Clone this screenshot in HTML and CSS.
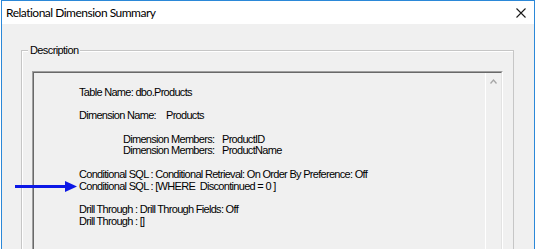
FILE: index.html
```html
<!DOCTYPE html>
<html lang="en">
<head>
  <meta charset="UTF-8">
  <title>Relational Dimension Summary</title>
  <link rel="stylesheet" href="styles.css">
</head>
<body>

  <div class="window">
    <div class="titlebar">
      <span class="title">Relational Dimension Summary</span>
      <svg class="close" width="10" height="10" viewBox="0 0 10 10">
        <path d="M0.5 0.5 L9.5 9.5 M9.5 0.5 L0.5 9.5" stroke="#1a1a1a" stroke-width="1.1" fill="none"/>
      </svg>
    </div>

    <div class="client">
      <div class="group">
        <span class="group-label">Description</span>

        <div class="textbox">
          <div class="textbox-inner">
            <div class="text">
              <div class="para">
                <div>Table Name: dbo.Products</div>
              </div>
              <div class="para">
                <div><span class="key">Dimension Name:</span>Products</div>
              </div>
              <div class="para members">
                <div><span class="key">Dimension Members:</span>ProductID</div>
                <div><span class="key">Dimension Members:</span>ProductName</div>
              </div>
              <div class="para">
                <div>Conditional SQL : Conditional Retrieval: On Order By Preference: Off</div>
                <div>Conditional SQL : [WHERE &nbsp;Discontinued = 0 ]</div>
              </div>
              <div class="para">
                <div>Drill Through : Drill Through Fields: Off</div>
                <div>Drill Through : []</div>
              </div>
            </div>

            <div class="scrollbar">
              <svg class="arrow-up" width="7" height="5" viewBox="0 0 7 5">
                <path d="M0.5 4.5 L3.5 1 L6.5 4.5" stroke="#a6a6a6" stroke-width="1.3" fill="none"/>
              </svg>
            </div>
          </div>
        </div>
      </div>
    </div>
  </div>

  <!-- callout arrow pointing at the WHERE clause -->
  <svg class="pointer" width="62" height="11" viewBox="0 0 62 11">
    <rect x="0" y="4" width="52" height="3" fill="#0c18e6"/>
    <polygon points="50,0 62,5.5 50,11" fill="#0c18e6"/>
  </svg>

</body>
</html>
```

FILE: styles.css
```css
body {
  margin: 0;
  background-color: #ffffff;
  font-family: "Liberation Sans", Arial, sans-serif;
  color: #000;
  overflow: hidden;
}
.window {
  margin-left: 1px;
  width: 532px;
  height: 260px;
  border: 1px solid #2b88d8;
  border-bottom: none;
  background-color: #f0f0f0;
}
.titlebar {
  height: 23px;
  background-color: #fff;
  display: flex;
  align-items: center;
  justify-content: space-between;
  padding: 0 8px 0 4px;
}
.title {
  font-family: Lato, sans-serif;
  font-size: 12px;
  letter-spacing: -0.5px;
  color: #000;
}
.close {
  display: block;
}
.client {
  padding: 26px 0 0 19px;
}
.group {
  position: relative;
  width: 493px;
  height: 220px;
  border: 1px solid #c6c6c6;
  border-bottom: none;
  box-shadow: inset 1px 1px 0 #fff;
  padding: 20px 10px 0 10px;
  box-sizing: border-box;
}
.group-label {
  position: absolute;
  top: -7px;
  left: 6px;
  padding: 0 2px;
  background-color: #f0f0f0;
  font-size: 11px;
  letter-spacing: -0.6px;
  line-height: 13px;
}
.textbox {
  border: 1px solid;
  border-color: #a0a0a0 #fff #fff #a0a0a0;
  height: 200px;
}
.textbox-inner {
  border: 1px solid;
  border-color: #696969 #e3e3e3 #e3e3e3 #696969;
  height: 100%;
  box-sizing: border-box;
  display: flex;
}
.text {
  flex: 1;
  padding: 14px 0 0 45px;
  font-size: 11px;
  line-height: 11.7px;
  letter-spacing: -0.7px;
  white-space: nowrap;
}
.para {
  margin-bottom: 11.7px;
}
.key {
  display: inline-block;
  width: 87px;
}
.members {
  padding-left: 44px;
}
.members .key {
  width: 99px;
}
.scrollbar {
  width: 15px;
  border-left: 1px solid #fff;
  background-color: #f0f0f0;
  display: flex;
  justify-content: center;
  padding-top: 6px;
}
.arrow-up {
  display: block;
}
.pointer {
  position: absolute;
  left: 15px;
  top: 181px;
}
```
